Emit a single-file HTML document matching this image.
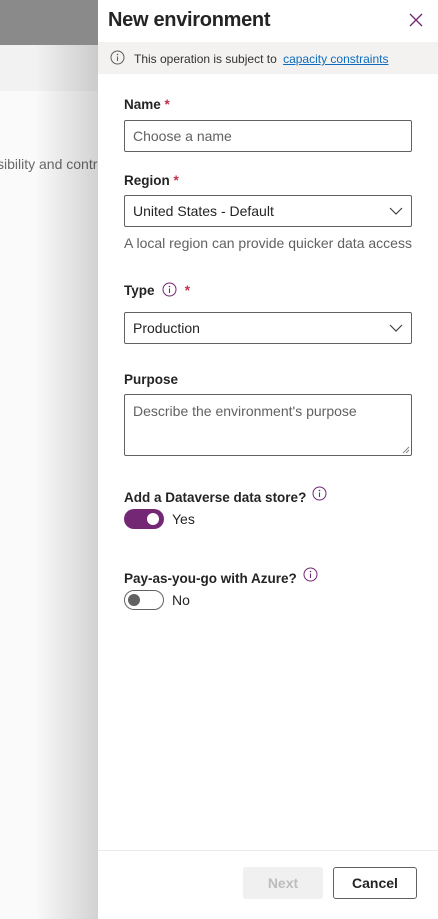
<!DOCTYPE html>
<html><head><meta charset="utf-8"><style>
*{box-sizing:border-box;margin:0;padding:0}
body{width:438px;height:919px;overflow:hidden;position:relative;font-family:"Liberation Sans",sans-serif;background:#fafafa;color:#242424}
.bg1{position:absolute;left:0;top:0;width:438px;height:45px;background:#8a8a8a}
.bg2{position:absolute;left:0;top:45px;width:438px;height:46px;background:#f2f2f2}
.bgtxt{position:absolute;left:-3px;top:156px;font-size:14px;color:#6a6a6a;white-space:nowrap}
.shade{position:absolute;left:35px;top:45px;width:63px;height:874px;background:linear-gradient(to right,rgba(0,0,0,0),rgba(0,0,0,0.16))}
.panel{position:absolute;left:98px;top:0;width:340px;height:919px;background:#fff}
.title{position:absolute;left:10px;top:9px;font-size:20px;font-weight:bold;color:#242424;letter-spacing:-0.3px}
.close{position:absolute;left:311px;top:13px}
.info{position:absolute;left:0;top:42px;width:340px;height:32px;background:#f3f2f1;font-size:12px;color:#323130}
.info .t{position:absolute;left:36px;top:10px}
.info a{color:#0f6cbd;text-decoration:underline;margin-left:3px}
.lbl{position:absolute;left:26px;font-size:13.5px;font-weight:bold;color:#242424}
.req{color:#c4314b}
.inp{position:absolute;left:26px;width:288px;height:32px;border:1px solid #616161;border-radius:2px;font-size:14px;padding:0 8px;line-height:30px}
.ph{color:#616161}
.hint{position:absolute;left:26px;font-size:14px;color:#616161}
.chev{position:absolute;right:8px;top:10px}
.tog{position:absolute;left:26px;width:40px;height:20px;border-radius:10px}
.foot{position:absolute;left:0;top:850px;width:340px;border-top:1px solid #ebebeb}
.btn{position:absolute;top:867px;height:32px;font-size:14px;font-weight:bold;text-align:center;line-height:30px;border-radius:3px}
</style></head><body>
<div class="bg1"></div><div class="bg2"></div>
<div class="bgtxt">sibility and contr</div>
<div class="shade"></div>
<div class="panel">
<div class="title">New environment</div>
<svg class="close" width="14" height="14" viewBox="0 0 14 14"><path d="M1 1L13 13M13 1L1 13" stroke="#742774" stroke-width="1.3"/></svg>
<div class="info"><svg style="position:absolute;left:12px;top:8px" width="15" height="15" viewBox="0 0 15 15"><circle cx="7.5" cy="7.5" r="6.5" fill="none" stroke="#605e5c"/><path d="M7.5 6.5v4.5" stroke="#605e5c" stroke-width="1.1"/><circle cx="7.5" cy="4.5" r=".8" fill="#605e5c"/></svg><span class="t">This operation is subject to <a>capacity constraints</a></span></div>

<div class="lbl" style="top:97px">Name <span class="req">*</span></div>
<div class="inp" style="top:120px"><span class="ph">Choose a name</span></div>

<div class="lbl" style="top:173px">Region <span class="req">*</span></div>
<div class="inp" style="top:195px">United States - Default<svg class="chev" width="14" height="10" viewBox="0 0 14 10"><path d="M1 2L7 8L13 2" fill="none" stroke="#424242" stroke-width="1.2"/></svg></div>
<div class="hint" style="top:235px">A local region can provide quicker data access</div>

<div class="lbl" style="top:282px">Type <svg style="vertical-align:-2px;margin-left:4px" width="15" height="15" viewBox="0 0 15 15"><circle cx="7.5" cy="7.5" r="6.5" fill="none" stroke="#742774"/><path d="M7.5 6.5v4.5" stroke="#742774" stroke-width="1.1"/><circle cx="7.5" cy="4.5" r=".8" fill="#742774"/></svg> &nbsp;<span class="req">*</span></div>
<div class="inp" style="top:312px">Production<svg class="chev" width="14" height="10" viewBox="0 0 14 10"><path d="M1 2L7 8L13 2" fill="none" stroke="#424242" stroke-width="1.2"/></svg></div>

<div class="lbl" style="top:372px">Purpose</div>
<div class="inp" style="top:394px;height:62px;line-height:normal;padding-top:8px"><span class="ph">Describe the environment's purpose</span><svg style="position:absolute;right:1px;bottom:1px" width="8" height="8" viewBox="0 0 8 8"><path d="M7 1L1 7M7 4L4 7" stroke="#888" stroke-width="1"/></svg></div>

<div class="lbl" style="top:486px">Add a Dataverse data store? <svg style="vertical-align:1px;margin-left:2px" width="15" height="15" viewBox="0 0 15 15"><circle cx="7.5" cy="7.5" r="6.5" fill="none" stroke="#742774"/><path d="M7.5 6.5v4.5" stroke="#742774" stroke-width="1.1"/><circle cx="7.5" cy="4.5" r=".8" fill="#742774"/></svg></div>
<div class="tog" style="top:509px;background:#742774"><div style="position:absolute;left:23px;top:4px;width:12px;height:12px;border-radius:6px;background:#fff"></div></div>
<div style="position:absolute;left:74px;top:511px;font-size:14px">Yes</div>

<div class="lbl" style="top:567px">Pay-as-you-go with Azure? <svg style="vertical-align:1px;margin-left:2px" width="15" height="15" viewBox="0 0 15 15"><circle cx="7.5" cy="7.5" r="6.5" fill="none" stroke="#742774"/><path d="M7.5 6.5v4.5" stroke="#742774" stroke-width="1.1"/><circle cx="7.5" cy="4.5" r=".8" fill="#742774"/></svg></div>
<div class="tog" style="top:590px;border:1px solid #616161;background:#fff"><div style="position:absolute;left:3px;top:3px;width:12px;height:12px;border-radius:6px;background:#616161"></div></div>
<div style="position:absolute;left:74px;top:592px;font-size:14px">No</div>

<div class="foot"></div>
<div class="btn" style="left:145px;width:80px;background:#f0f0f0;color:#bdbdbd;border:1px solid #f0f0f0">Next</div>
<div class="btn" style="left:235px;width:84px;background:#fff;color:#242424;border:1px solid #616161">Cancel</div>
</div>
</body></html>
